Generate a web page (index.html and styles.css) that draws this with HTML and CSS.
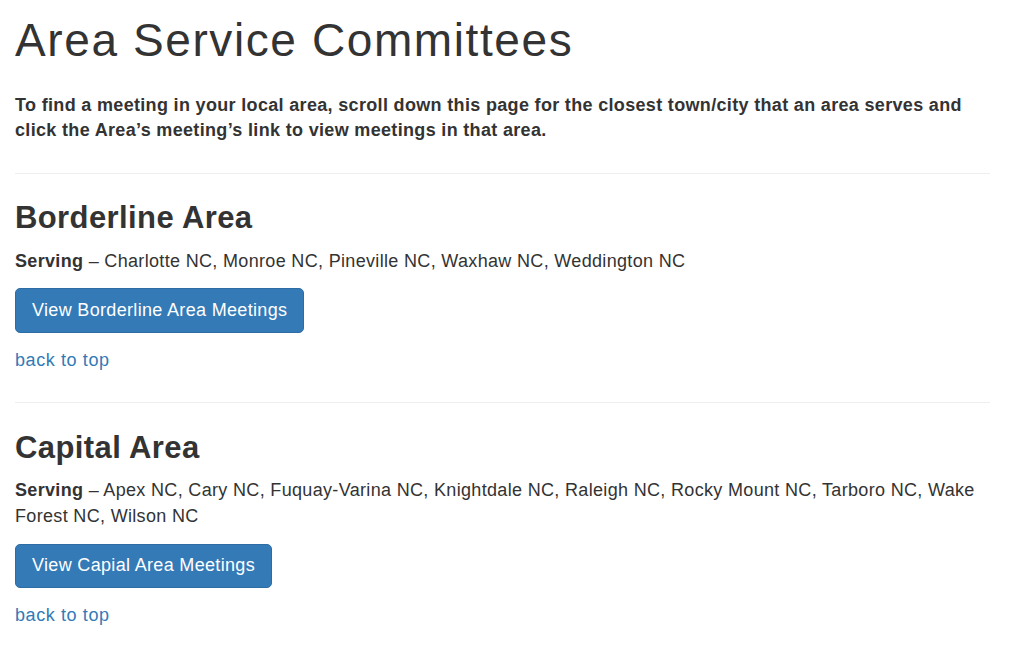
FILE: index.html
```html
<!DOCTYPE html>
<html lang="en">

<head>
    <meta charset="UTF-8">
    <meta name="viewport" content="width=device-width, initial-scale=1.0">
    <title>Area Service Committees</title>
    <link rel="stylesheet" href="styles.css">
</head>

<body>
    <div class="page" id="top">
        <h1>Area Service Committees</h1>

        <p class="intro">To find a meeting in your local area, scroll down this page for the closest town/city that an area serves and click the Area’s meeting’s link to view meetings in that area.</p>

        <hr class="divider">

        <!-- Borderline -->
        <div class="area">
            <h3 class="area-title">Borderline Area</h3>
            <p class="serving"><strong>Serving</strong> – Charlotte NC, Monroe NC, Pineville NC, Waxhaw NC, Weddington NC</p>
            <div class="actions">
                <a href="#" class="btn">View Borderline Area Meetings</a>
            </div>
            <a href="#top" class="back-link">back to top</a>
        </div>

        <hr class="divider">

        <!-- Capital -->
        <div class="area">
            <h3 class="area-title">Capital Area</h3>
            <p class="serving"><strong>Serving</strong> – Apex NC, Cary NC, Fuquay-Varina NC, Knightdale NC, Raleigh NC, Rocky Mount NC, Tarboro NC, Wake Forest NC, Wilson NC</p>
            <div class="actions">
                <a href="#" class="btn">View Capial Area Meetings</a>
            </div>
            <a href="#top" class="back-link">back to top</a>
        </div>
    </div>
</body>

</html>
```

FILE: styles.css
```css
body {
    margin: 0;
    font-family: 'Liberation Sans', Arial, sans-serif;
    font-size: 18px;
    line-height: 1.42857;
    letter-spacing: 0.33px;
    color: #333;
    background-color: #fff;
}

.page {
    width: 975px;
    padding: 0 15px;
}

h1 {
    font-size: 46px;
    font-weight: normal;
    line-height: 1.1;
    letter-spacing: 1.6px;
    margin: 15px 0 27px;
}

.intro {
    font-weight: bold;
    margin: 0;
}

.divider {
    border: 0;
    border-top: 1px solid #eee;
    margin: 28.5px 0 27.5px;
}

.area-title {
    font-size: 31px;
    font-weight: bold;
    line-height: 1.1;
    letter-spacing: 0.4px;
    margin: 0 0 13.5px;
}

.serving {
    margin: 0 0 14px;
}

.actions {
    display: flex;
    margin-bottom: 15px;
}

.btn {
    display: inline-block;
    padding: 8.5px 16px;
    font-size: 18px;
    line-height: 1.42857;
    color: #fff;
    background-color: #337ab7;
    border: 1px solid #2e6da4;
    border-radius: 5px;
    text-decoration: none;
}

.back-link {
    display: block;
    color: #337ab7;
    text-decoration: none;
    letter-spacing: 0.6px;
}
```
